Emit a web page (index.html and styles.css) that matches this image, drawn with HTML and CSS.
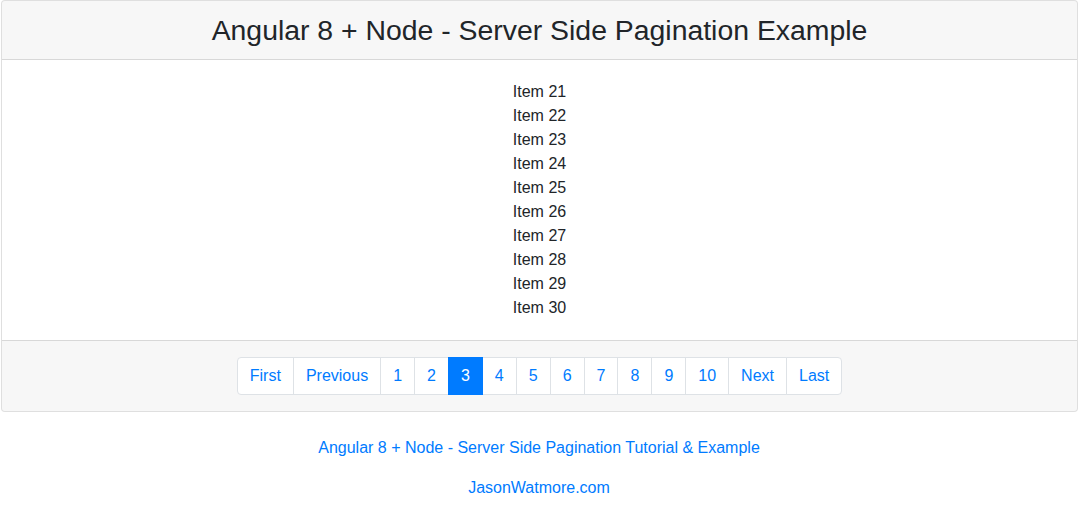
FILE: index.html
```html
<!DOCTYPE html>
<html lang="en">
<head>
<meta charset="utf-8">
<title>Angular 8 + Node - Server Side Pagination Example</title>
<link rel="stylesheet" href="styles.css">
</head>
<body>
<div class="card">
  <div class="card-header">
    <h3 class="title">Angular 8 + Node - Server Side Pagination Example</h3>
  </div>
  <div class="card-body">
    <div class="item">Item 21</div>
    <div class="item">Item 22</div>
    <div class="item">Item 23</div>
    <div class="item">Item 24</div>
    <div class="item">Item 25</div>
    <div class="item">Item 26</div>
    <div class="item">Item 27</div>
    <div class="item">Item 28</div>
    <div class="item">Item 29</div>
    <div class="item">Item 30</div>
  </div>
  <div class="card-footer">
    <ul class="pagination">
      <li class="page-item"><a class="page-link" href="#">First</a></li>
      <li class="page-item"><a class="page-link" href="#">Previous</a></li>
      <li class="page-item"><a class="page-link" href="#">1</a></li>
      <li class="page-item"><a class="page-link" href="#">2</a></li>
      <li class="page-item active"><a class="page-link" href="#">3</a></li>
      <li class="page-item"><a class="page-link" href="#">4</a></li>
      <li class="page-item"><a class="page-link" href="#">5</a></li>
      <li class="page-item"><a class="page-link" href="#">6</a></li>
      <li class="page-item"><a class="page-link" href="#">7</a></li>
      <li class="page-item"><a class="page-link" href="#">8</a></li>
      <li class="page-item"><a class="page-link" href="#">9</a></li>
      <li class="page-item"><a class="page-link" href="#">10</a></li>
      <li class="page-item"><a class="page-link" href="#">Next</a></li>
      <li class="page-item"><a class="page-link" href="#">Last</a></li>
    </ul>
  </div>
</div>
<div class="credits">
  <p><a href="#">Angular 8 + Node - Server Side Pagination Tutorial &amp; Example</a></p>
  <p><a href="#">JasonWatmore.com</a></p>
</div>
</body>
</html>
```

FILE: styles.css
```css
* { box-sizing: border-box; }
html, body {
  margin: 0;
  padding: 0;
}
body {
  font-family: "Liberation Sans", Arial, sans-serif;
  font-size: 16px;
  line-height: 1.5;
  color: #212529;
  background: #fff;
}
a {
  color: #007bff;
  text-decoration: none;
}
.card {
  margin-left: 1px;
  width: calc(100% - 1px);
  border: 1px solid rgba(0, 0, 0, 0.125);
  border-radius: 4px;
  background: #fff;
  display: flex;
  flex-direction: column;
}
.card-header {
  padding: 12px 20px;
  background: rgba(0, 0, 0, 0.03);
  border-bottom: 1px solid rgba(0, 0, 0, 0.125);
  text-align: center;
  border-radius: 3px 3px 0 0;
}
.title {
  margin: 0;
  font-size: 28.4px;
  font-weight: 500;
  line-height: 33.6px;
  position: relative;
  top: 1px;
}
.card-body {
  padding: 20px;
  text-align: center;
}
.card-footer {
  padding: 16px 20px;
  background: rgba(0, 0, 0, 0.03);
  border-top: 1px solid rgba(0, 0, 0, 0.125);
  border-radius: 0 0 3px 3px;
  display: flex;
  justify-content: center;
}
.pagination {
  display: flex;
  list-style: none;
  margin: 0;
  padding: 0;
}
.page-link {
  display: block;
  padding: 8px 12px;
  margin-left: -1px;
  line-height: 1.25;
  color: #007bff;
  background: #fff;
  border: 1px solid #dee2e6;
}
.page-item:first-child .page-link {
  margin-left: 0;
  border-radius: 4px 0 0 4px;
}
.page-item:last-child .page-link {
  border-radius: 0 4px 4px 0;
}
.page-item.active .page-link {
  position: relative;
  z-index: 1;
  color: #fff;
  background: #007bff;
  border-color: #007bff;
}
.credits {
  margin-top: 24px;
  text-align: center;
}
.credits p {
  margin: 0 0 16px;
}
```
